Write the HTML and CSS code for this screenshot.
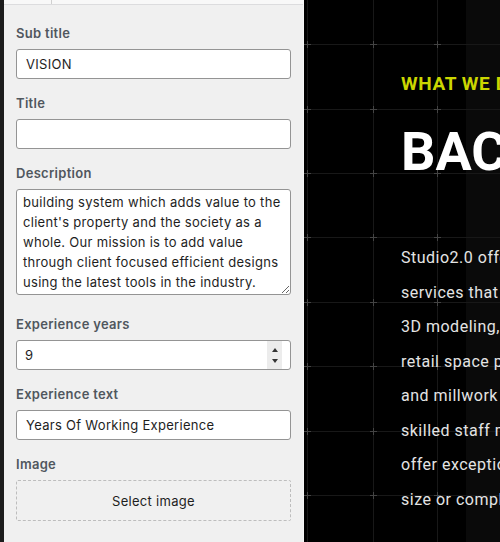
FILE: index.html
```html
<!DOCTYPE html>
<html>
<head>
<meta charset="utf-8">
<link rel="stylesheet" href="styles.css">
</head>
<body>
<div class="app">
  <div class="strip"></div>
  <aside class="panel">
    <div class="tabs"><span class="tab"></span></div>
    <div class="fields">
      <div class="field">
        <label class="label">Sub title</label>
        <input class="input" type="text" value="VISION">
      </div>
      <div class="field">
        <label class="label">Title</label>
        <input class="input" type="text" value="">
      </div>
      <div class="field field-area">
        <label class="label">Description</label>
        <textarea class="area" wrap="off">building system which adds value to the
client's property and the society as a
whole. Our mission is to add value
through client focused efficient designs
using the latest tools in the industry.</textarea>
      </div>
      <div class="field">
        <label class="label">Experience years</label>
        <div class="number">
          <input class="input" type="text" value="9">
          <span class="spin"><span class="up"></span><span class="down"></span></span>
        </div>
      </div>
      <div class="field">
        <label class="label">Experience text</label>
        <input class="input" type="text" value="Years Of Working Experience">
      </div>
      <div class="field">
        <label class="label">Image</label>
        <div class="dropzone">Select image</div>
      </div>
    </div>
  </aside>
  <main class="stage">
    <svg class="grid" width="196" height="542" viewBox="0 0 196 542">
      <rect x="162" y="0" width="34" height="542" fill="#0a0a0a"/>
      <g stroke="#181818" stroke-width="1">
        <line x1="3.5" y1="0" x2="3.5" y2="542"/>
        <line x1="69.5" y1="0" x2="69.5" y2="542"/>
        <line x1="133.5" y1="0" x2="133.5" y2="542"/>
        <line x1="0" y1="44.5" x2="196" y2="44.5"/>
        <line x1="0" y1="109.5" x2="196" y2="109.5"/>
        <line x1="0" y1="173.5" x2="196" y2="173.5"/>
        <line x1="0" y1="237.5" x2="196" y2="237.5"/>
        <line x1="0" y1="302.5" x2="196" y2="302.5"/>
        <line x1="0" y1="366.5" x2="196" y2="366.5"/>
        <line x1="0" y1="431.5" x2="196" y2="431.5"/>
        <line x1="0" y1="495.5" x2="196" y2="495.5"/>
      </g>
      <g stroke="#444" stroke-width="1">
        <path d="M0 44.5h7M3.5 41v7M66 44.5h7M69.5 41v7M130 44.5h7M133.5 41v7
                 M0 109.5h7M3.5 106v7M66 109.5h7M69.5 106v7M130 109.5h7M133.5 106v7
                 M0 173.5h7M3.5 170v7M66 173.5h7M69.5 170v7M130 173.5h7M133.5 170v7
                 M0 237.5h7M3.5 234v7M66 237.5h7M69.5 234v7M130 237.5h7M133.5 234v7
                 M0 302.5h7M3.5 299v7M66 302.5h7M69.5 299v7M130 302.5h7M133.5 299v7
                 M0 366.5h7M3.5 363v7M66 366.5h7M69.5 363v7M130 366.5h7M133.5 363v7
                 M0 431.5h7M3.5 428v7M66 431.5h7M69.5 428v7M130 431.5h7M133.5 428v7
                 M0 495.5h7M3.5 492v7M66 495.5h7M69.5 492v7M130 495.5h7M133.5 492v7"/>
      </g>
    </svg>
    <div class="content">
      <p class="eyebrow">WHAT WE DO</p>
      <h1 class="headline">BACKGROUND</h1>
      <p class="copy">
        <span>Studio2.0 offers a full range of</span>
        <span>services that include design,</span>
        <span>3D modeling, rendering and</span>
        <span>retail space planning, fixtures</span>
        <span>and millwork production. Our</span>
        <span>skilled staff members are able to</span>
        <span>offer exceptional results for any</span>
        <span>size or complexity of project.</span>
      </p>
    </div>
  </main>
</div>
</body>
</html>
```

FILE: styles.css
```css
* { box-sizing: border-box; }
html, body { margin: 0; padding: 0; }
body {
  width: 500px;
  height: 542px;
  overflow: hidden;
  background: #000;
  font-family: Inter, "Liberation Sans", sans-serif;
}
.app {
  display: flex;
  height: 542px;
}
.strip {
  width: 4px;
  flex: none;
  background: #1c1c1c;
}
.panel {
  width: 300px;
  flex: none;
  background: #f0f0f0;
  border-right: 1px solid #f7f7f7;
  display: flex;
  flex-direction: column;
}
.tabs {
  height: 5px;
  background: #f8f8f8;
  border-bottom: 1px solid #dcdcde;
  display: flex;
}
.tab {
  width: 48px;
  border-right: 1px solid #d0d0d0;
}
.fields {
  padding: 19px 12px 0 12px;
  display: flex;
  flex-direction: column;
}
.field {
  display: flex;
  flex-direction: column;
  margin-bottom: 15px;
}
.field-area { margin-bottom: 20px; }
.label {
  font-size: 13px;
  line-height: 18px;
  font-weight: 600;
  letter-spacing: 0.3px;
  color: #50575e;
  margin-bottom: 7px;
}
.input {
  display: block;
  width: 100%;
  height: 30px;
  margin: 0;
  padding: 0 9px;
  border: 1px solid #949494;
  border-radius: 3px;
  background: #fff;
  color: #1e1e1e;
  font-family: Inter, "Liberation Sans", sans-serif;
  font-size: 13px;
  letter-spacing: 0.3px;
  outline: none;
}
.area {
  display: block;
  width: 100%;
  height: 106px;
  margin: 0;
  padding: 2px 6px;
  border: 1px solid #949494;
  border-radius: 3px;
  background: #fff;
  color: #1e1e1e;
  font-family: Inter, "Liberation Sans", sans-serif;
  font-size: 13px;
  letter-spacing: 0.3px;
  line-height: 20px;
  white-space: pre;
  overflow: hidden;
  resize: vertical;
  outline: none;
}
.number { position: relative; }
.number .input { padding-left: 8px; }
.spin {
  position: absolute;
  right: 9px;
  top: 1px;
  bottom: 1px;
  width: 15px;
  background: #ececec;
  display: flex;
  flex-direction: column;
  align-items: center;
  justify-content: center;
  gap: 7px;
}
.up {
  width: 0; height: 0;
  border-left: 3.5px solid transparent;
  border-right: 3.5px solid transparent;
  border-bottom: 4px solid #333;
}
.down {
  width: 0; height: 0;
  border-left: 3.5px solid transparent;
  border-right: 3.5px solid transparent;
  border-top: 4px solid #333;
}
.dropzone {
  height: 41px;
  border: 1px dashed #bdbdbd;
  border-radius: 2px;
  display: flex;
  align-items: center;
  justify-content: center;
  font-size: 13px;
  letter-spacing: 0.3px;
  color: #1e1e1e;
}
.stage {
  position: relative;
  flex: 1;
  background: #000;
  overflow: hidden;
}
.grid {
  position: absolute;
  left: 0;
  top: 0;
}
.content {
  position: relative;
  padding: 68px 0 0 97px;
  font-family: Roboto, sans-serif;
  white-space: nowrap;
}
.eyebrow {
  margin: 0;
  font-size: 19px;
  line-height: 32px;
  font-weight: 700;
  letter-spacing: 0.6px;
  color: #cbd600;
}
.headline {
  margin: 20px 0 0 0;
  font-size: 54px;
  line-height: 64px;
  font-weight: 700;
  color: #fff;
}
.copy {
  margin: 57px 0 0 0;
  font-size: 16px;
  line-height: 34.5px;
  color: #e4e4e4;
  letter-spacing: 0.5px;
  display: flex;
  flex-direction: column;
}
```
